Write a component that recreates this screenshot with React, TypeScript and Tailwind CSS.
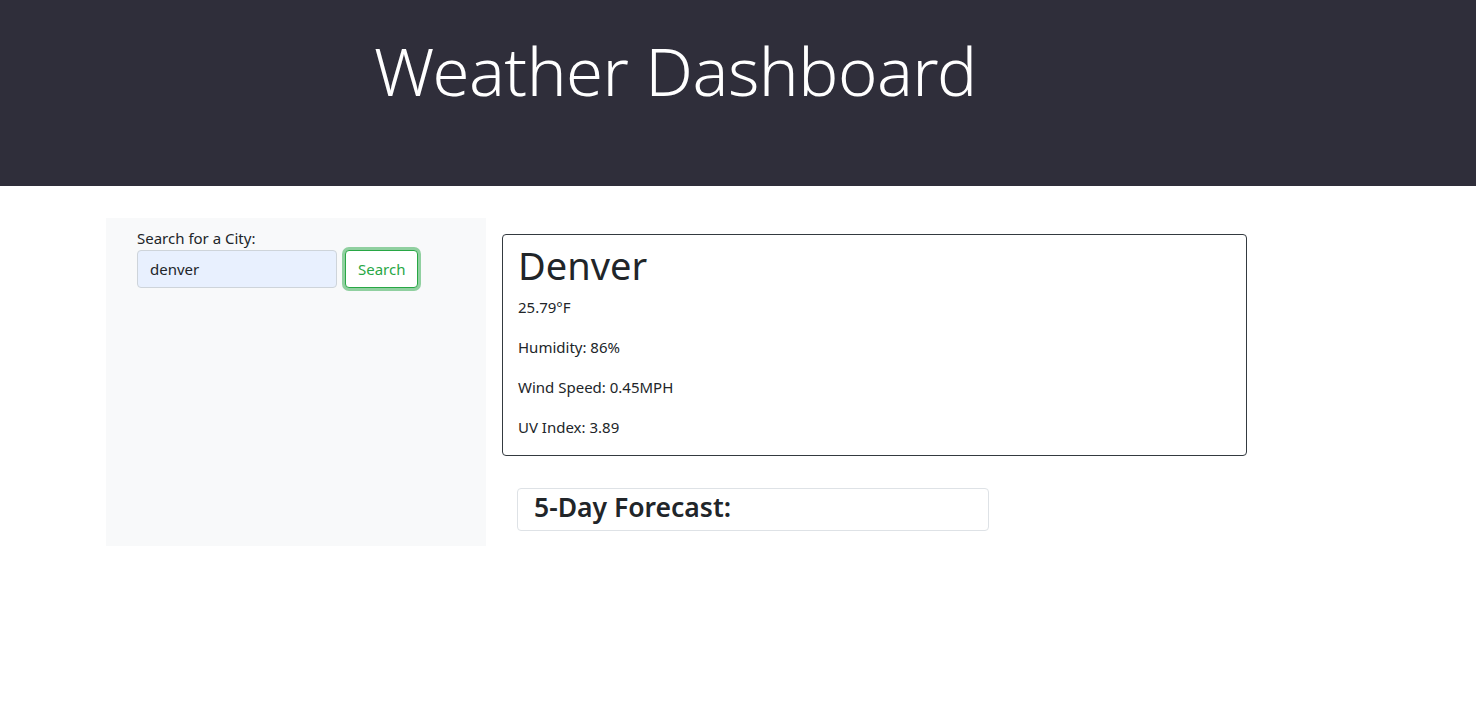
import React, { useState } from "react";

const font = { fontFamily: '"Noto Sans", "Open Sans", Arial, sans-serif' };

const App: React.FC = () => {
  const [city, setCity] = useState("denver");

  return (
    <div className="min-h-screen bg-white text-[#212529]" style={font}>
      {/* Header */}
      <header className="h-[186px] bg-[#2f2e3a] pl-[374px] pt-[30px]">
        <h1 className="text-[67px] font-light leading-[1.2] text-white tracking-[-0.5px]">
          Weather Dashboard
        </h1>
      </header>

      <main className="mt-8 flex pl-[106px]">
        {/* Search sidebar */}
        <aside className="h-[328px] w-[380px] bg-[#f8f9fa] pl-[31px] pt-2">
          <label htmlFor="city" className="block text-[15px] leading-6">
            Search for a City:
          </label>
          <div className="flex items-center gap-[8px]">
            <input
              id="city"
              value={city}
              onChange={(e) => setCity(e.target.value)}
              className="h-[38px] w-[200px] rounded-[4px] border border-[#ced4da] bg-[#e8f0fe] px-3 text-[15px] outline-none"
            />
            <button className="h-[38px] rounded-[4px] border border-[#28a745] bg-white px-3 text-[15px] text-[#28a745] shadow-[0_0_0_3px_rgba(40,167,69,0.5)]">
              Search
            </button>
          </div>
        </aside>

        {/* Results */}
        <section className="ml-4 mt-4 w-[745px]">
          <div className="rounded-[4px] border border-[#343a40] px-[15px] pt-[7px]">
            <h2 className="mb-[5px] text-[38px] leading-[1.25]">Denver</h2>
            <p className="mb-4 text-[15px] leading-6">25.79°F</p>
            <p className="mb-4 text-[15px] leading-6">Humidity: 86%</p>
            <p className="mb-4 text-[15px] leading-6">Wind Speed: 0.45MPH</p>
            <p className="mb-4 text-[15px] leading-6">UV Index: 3.89</p>
          </div>

          <div className="ml-[15px] mt-8 h-[43px] w-[472px] rounded-[4px] border border-[#dee2e6] pl-4">
            <h3 className="text-[26.5px] font-semibold leading-[36px]">5-Day Forecast:</h3>
          </div>
        </section>
      </main>
    </div>
  );
};

export default App;
